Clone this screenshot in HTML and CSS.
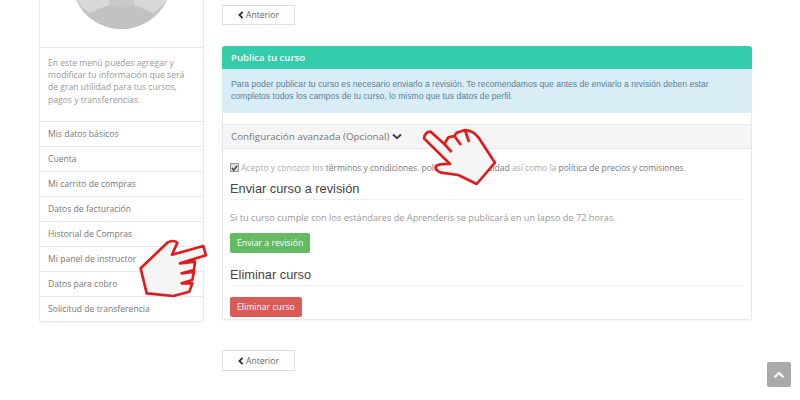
FILE: index.html
```html
<!DOCTYPE html>
<html lang="es">
<head>
    <meta charset="UTF-8">
    <title>Publica tu curso</title>
    <link rel="stylesheet" href="styles.css">
</head>
<body>

    <div class="page">
        <div class="sidebar">
            <div class="avatar-box">
                <svg class="avatar" width="91" height="29" viewBox="0 0 91 29">
                    <path d="M0 0H91A50 50 0 0 1 0 0Z" fill="#c2c2c2"/>
                    <path d="M0 0H33V5L13 13Q5 7 0 0Z" fill="#d8d8d8"/>
                    <path d="M91 0H58V5L78 13Q86 7 91 0Z" fill="#d8d8d8"/>
                    <path d="M33 0H58V5L45.500 8 33 5Z" fill="#c9c9c9"/>
                </svg>
            </div>
            <p class="intro">En este menú puedes agregar y modificar tu información que será de gran utilidad para tus cursos, pagos y transferencias.</p>
            <a class="menu-item">Mis datos básicos</a>
            <a class="menu-item">Cuenta</a>
            <a class="menu-item">Mi carrito de compras</a>
            <a class="menu-item">Datos de facturación</a>
            <a class="menu-item">Historial de Compras</a>
            <a class="menu-item">Mi panel de instructor</a>
            <a class="menu-item">Datos para cobro</a>
            <a class="menu-item">Solicitud de transferencia</a>
        </div>

        <div class="main">
            <button class="back-btn">
                <svg class="chev" width="6" height="8" viewBox="0 0 6 8"><path d="M4.6 .8 1.4 4l3.2 3.2" fill="none" stroke="#333" stroke-width="1.8"/></svg>
                Anterior
            </button>

            <div class="panel">
                <div class="panel-title">Publica tu curso</div>
                <div class="notice">Para poder publicar tu curso es necesario enviarlo a revisión. Te recomendamos que antes de enviarlo a revisión deben estar completos todos los campos de tu curso, lo mismo que tus datos de perfil.</div>
                <div class="advanced">
                    Configuración avanzada (Opcional)
                    <svg width="10" height="7" viewBox="0 0 10 7"><path d="M1 1.4 5 5.2 9 1.4" fill="none" stroke="#444" stroke-width="2"/></svg>
                </div>
                <div class="terms">
                    <span class="check"><svg width="8" height="8" viewBox="0 0 8 8"><path d="M1 4 3.2 6.4 7 1.4" fill="none" stroke="#444" stroke-width="1.6"/></svg></span>
                    <span>Acepto y conozco los <span class="dark">términos y condiciones</span>, <span class="dark">políticas de privacidad</span> así como la <span class="dark">política de precios y comisiones</span>.</span>
                </div>
                <h3 class="section-title">Enviar curso a revisión</h3>
                <p class="section-text">Si tu curso cumple con los estándares de Aprenderis se publicará en un lapso de 72 horas.</p>
                <button class="action-btn green">Enviar a revisión</button>
                <h3 class="section-title delete-title">Eliminar curso</h3>
                <button class="action-btn red">Eliminar curso</button>
            </div>

            <button class="back-btn bottom-back">
                <svg class="chev" width="6" height="8" viewBox="0 0 6 8"><path d="M4.6 .8 1.4 4l3.2 3.2" fill="none" stroke="#333" stroke-width="1.8"/></svg>
                Anterior
            </button>
        </div>
    </div>

    <!-- red hands drawn over the page -->
    <svg class="hand hand-left" width="80" height="70" viewBox="0 0 240 210">
        <path d="M32 115 112 38Q130 28 142 38L126 74 220 48 228 76 150 100 195 95 192 120 155 130 192 125 187 150 155 160 187 160 178 185 130 198 50 190Z" fill="#f5f5f5" stroke="#e4191c" stroke-width="8" stroke-linejoin="round"/>
    </svg>
    <svg class="hand hand-right" width="90" height="70" viewBox="0 0 270 210">
        <path d="M27 55Q30 35 47 35L88 72 100 52 118 48 125 38 150 30Q175 32 190 52L240 128 185 192 130 165 78 158Q60 150 62 140 72 130 105 132L27 55Z" fill="#f5f5f5" stroke="#e4191c" stroke-width="8" stroke-linejoin="round"/>
        <path d="M88 72 110 96M118 48 138 75M150 30 162 66" fill="none" stroke="#e4191c" stroke-width="8"/>
    </svg>

    <div class="to-top">
        <svg width="12" height="8" viewBox="0 0 12 8"><path d="M1.500 6.200 6 2l4.500 4.200" fill="none" stroke="#fff" stroke-width="2.200"/></svg>
    </div>

</body>
</html>
```
FILE: styles.css
```css
body {
    margin: 0;
    height: 400px;
    overflow: hidden;
    background-color: #fff;
    font-family: "Open Sans", sans-serif;
    color: #888;
}
.page {
    display: flex;
    align-items: flex-start;
    gap: 18px;
    padding-left: 39px;
}
.sidebar {
    flex: 0 0 163px;
    border: 1px solid #e8e8e8;
    border-top: none;
    border-radius: 0 0 3px 3px;
    box-shadow: 0 1px 1px rgba(0, 0, 0, 0.05);
}
.avatar-box {
    height: 47px;
    border-bottom: 1px solid #e8e8e8;
}
.avatar {
    display: block;
    margin: 0 auto;
}
.intro {
    margin: 0;
    padding: 9px 15px 0 8px;
    font-size: 8.6px;
    line-height: 12.2px;
    color: #999;
    height: 64px;
}
.menu-item {
    display: block;
    height: 24px;
    line-height: 24px;
    padding-left: 8px;
    border-top: 1px solid #e8e8e8;
    font-size: 8.6px;
    color: #777;
    white-space: nowrap;
}
.main {
    flex: 0 0 530px;
    padding-top: 5px;
}
.back-btn {
    display: flex;
    align-items: center;
    justify-content: center;
    gap: 2px;
    width: 73px;
    height: 20px;
    padding: 0;
    background-color: #fff;
    border: 1px solid #ddd;
    font-family: "Open Sans", sans-serif;
    font-size: 8.6px;
    color: #666;
}
.bottom-back {
    margin-top: 30px;
    height: 21px;
}
.panel {
    margin-top: 21px;
    height: 274px;
    box-sizing: border-box;
    border: 1px solid #e8e8e8;
    border-top: none;
    border-radius: 3px;
    box-shadow: 0 1px 1px rgba(0, 0, 0, 0.05);
}
.panel-title {
    height: 23px;
    line-height: 23px;
    margin: 0 -1px;
    padding-left: 9px;
    background-color: #33cdab;
    border-radius: 3px 3px 0 0;
    color: #fff;
    font-size: 9.6px;
    font-weight: 600;
}
.notice {
    height: 44px;
    box-sizing: border-box;
    margin: 0 -1px;
    padding: 9px 30px 0 9px;
    background-color: #d9edf7;
    border-radius: 0 0 3px 3px;
    font-family: "Liberation Sans", sans-serif;
    font-size: 8.6px;
    line-height: 12px;
    color: #5c8296;
}
.advanced {
    display: flex;
    align-items: center;
    gap: 3px;
    height: 25px;
    box-sizing: border-box;
    margin: 11px -1px 0 0;
    padding-left: 8px;
    background-color: #f5f5f5;
    border: 1px solid #e8e8e8;
    border-left: none;
    font-size: 9.8px;
    color: #777;
}
.terms {
    display: flex;
    align-items: center;
    gap: 2px;
    margin-top: 11px;
    padding-left: 7px;
    height: 15px;
    font-size: 8.5px;
    color: #aaa;
    white-space: nowrap;
}
.dark {
    color: #777;
}
.check {
    display: flex;
    align-items: center;
    justify-content: center;
    width: 7px;
    height: 7px;
    background-color: #ddd;
    border: 1px solid #999;
}
.section-title {
    margin: 6px 7px 0;
    height: 18px;
    line-height: 16px;
    border-bottom: 1px solid #eee;
    font-family: "Liberation Sans", sans-serif;
    font-size: 12.8px;
    font-weight: normal;
    color: #444;
}
.section-text {
    margin: 11px 0 0 7px;
    height: 14px;
    line-height: 13px;
    font-size: 9.2px;
    color: #999;
}
.action-btn {
    display: block;
    margin: 8px 0 0 7px;
    height: 20px;
    padding: 0 7px;
    border: none;
    border-radius: 2px;
    color: #fff;
    opacity: 0.95;
    font-family: "Open Sans", sans-serif;
    font-size: 8.7px;
}
.green {
    background-color: #5cb85c;
}
.red {
    background-color: #d9534f;
}
.delete-title {
    margin-top: 14px;
}
.delete-title + .red {
    margin-top: 11px;
}
.hand {
    position: absolute;
}
.hand-left {
    left: 130px;
    top: 230px;
}
.hand-right {
    left: 415px;
    top: 120px;
}
.to-top {
    position: absolute;
    left: 767px;
    top: 362px;
    width: 24px;
    height: 25px;
    display: flex;
    align-items: center;
    justify-content: center;
    background-color: #aaa;
    border-radius: 2px;
}
```
